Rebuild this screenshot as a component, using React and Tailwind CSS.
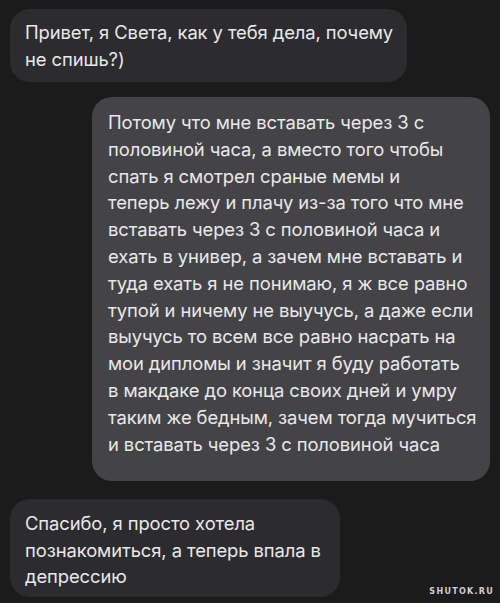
import React from "react";

const m1 = ["Привет, я Света, как у тебя дела, почему", "не спишь?)"];
const m2 = [
  "Потому что мне вставать через 3 с",
  "половиной часа, а вместо того чтобы",
  "спать я смотрел сраные мемы и",
  "теперь лежу и плачу из-за того что мне",
  "вставать через 3 с половиной часа и",
  "ехать в универ, а зачем мне вставать и",
  "туда ехать я не понимаю, я ж все равно",
  "тупой и ничему не выучусь, а даже если",
  "выучусь то всем все равно насрать на",
  "мои дипломы и значит я буду работать",
  "в макдаке до конца своих дней и умру",
  "таким же бедным, зачем тогда мучиться",
  "и вставать через 3 с половиной часа",
];
const m3 = ["Спасибо, я просто хотела", "познакомиться, а теперь впала в", "депрессию"];

function Lines({ lines }) {
  return lines.map((l, i) => (
    <div key={i} className="whitespace-nowrap">
      {l}
    </div>
  ));
}

export default function App() {
  return (
    <div
      className="relative w-[500px] h-[603px] overflow-hidden bg-[#1b1b1c] text-[#e8e8ea] text-[18.4px] leading-[27px] tracking-[-0.005em]"
      style={{ fontFamily: "Inter, 'Noto Sans', sans-serif" }}
    >
      <div className="flex flex-col pt-[9px]">
        <div className="ml-[10px] w-[397px] rounded-[20px] bg-[#2c2c2e] pl-[15px] pt-[10px] pb-[9px]">
          <Lines lines={m1} />
        </div>
        <div className="ml-[92px] mt-[15px] w-[398px] rounded-[20px] bg-[#444446] pl-[16px] pt-[12px] pb-[24px] leading-[26.8px]">
          <Lines lines={m2} />
        </div>
        <div className="ml-[10px] mt-[18px] w-[330px] rounded-[20px] bg-[#2c2c2e] pl-[15px] pt-[11px] pb-[7px] leading-[26.5px]">
          <Lines lines={m3} />
        </div>
      </div>
      <div
        className="absolute right-[6px] bottom-[7px] text-[8px] leading-[8px] font-bold tracking-[0.16em] text-[#d0d0d0]"
        style={{ fontFamily: "'DejaVu Sans', sans-serif" }}
      >
        SHUTOK.RU
      </div>
    </div>
  );
}
